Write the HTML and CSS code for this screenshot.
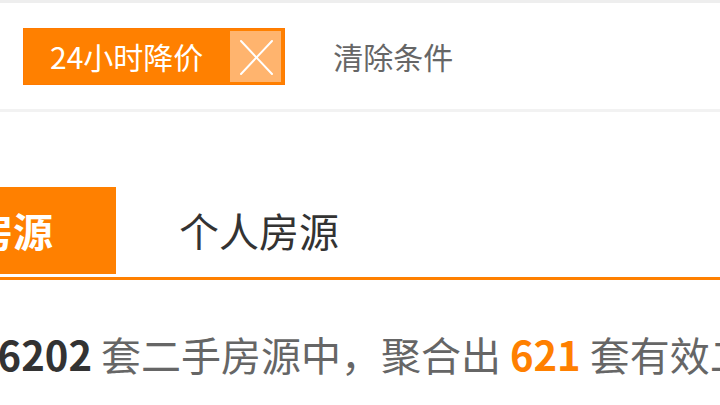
FILE: index.html
```html
<!DOCTYPE html>
<html lang="zh-CN">
<head>
<meta charset="utf-8">
<title>二手房筛选</title>
<link rel="stylesheet" href="styles.css">
</head>
<body>
<div class="page">
  <div class="filter-bar">
    <span class="tag">
      <span class="tag-text">24小时降价</span>
      <span class="tag-close">
        <svg viewBox="0 0 50 50" width="50" height="50"><path d="M10 9 L41 42 M41 9 L10 42" stroke="#fff" stroke-width="2" fill="none" stroke-linecap="round"/></svg>
      </span>
    </span>
    <a class="clear">清除条件</a>
  </div>
  <div class="tabs">
    <div class="tab active">全部房源</div>
    <div class="tab">个人房源</div>
  </div>
  <p class="summary"><b class="total">16202</b> 套二手房源中，聚合出 <b class="hit">621</b> 套有效二手房源</p>
</div>
</body>
</html>
```
FILE: styles.css
```css
html, body {
  margin: 0;
  padding: 0;
  background: #fff;
}
.page {
  width: 720px;
  height: 405px;
  overflow: hidden;
  font-family: "Noto Sans CJK SC", "Noto Sans", sans-serif;
  border-top: 3px solid #eeeeee;
  box-sizing: border-box;
}
.filter-bar {
  height: 106px;
  border-bottom: 3px solid #f2f2f2;
  display: flex;
  align-items: center;
  padding-left: 23px;
}
.tag {
  display: flex;
  align-items: center;
  height: 57px;
  box-sizing: border-box;
  background: #ff8000;
  border: 1px solid #ff7a00;
  padding: 0 3px 0 26px;
  margin-top: 1px;
}
.tag-text {
  color: #fff;
  font-size: 30px;
  line-height: 57px;
  margin-right: 27px;
}
.tag-close {
  width: 51px;
  height: 51px;
  background: #ffb46e;
  display: flex;
  align-items: center;
  justify-content: center;
}
.clear {
  margin-left: 48px;
  font-size: 30px;
  color: #666;
}
.tabs {
  display: flex;
  margin-top: 75px;
  border-bottom: 3px solid #ff8000;
}
.tab {
  height: 87px;
  line-height: 87px;
  padding: 0 63px;
  margin-bottom: 3px;
  font-size: 40px;
  color: #333;
  white-space: nowrap;
}
.tab.active {
  background: #ff8000;
  color: #fff;
  font-weight: bold;
  margin-left: -170px;
}
.summary {
  margin: 49px 0 0 -26px;
  font-size: 40px;
  line-height: 50px;
  color: #666;
  white-space: nowrap;
}
.total {
  color: #333;
}
.hit {
  color: #ff8000;
}
```
